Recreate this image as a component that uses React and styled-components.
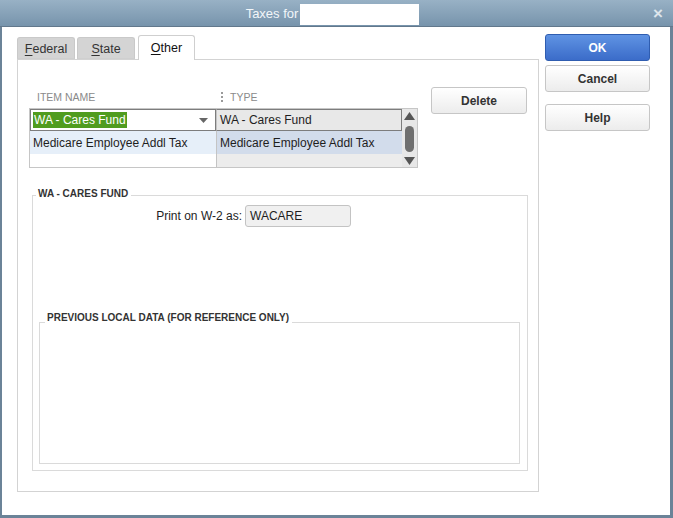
import React from "react";
import styled, { createGlobalStyle } from "styled-components";

const GlobalStyle = createGlobalStyle`
  html, body {
    margin: 0;
    padding: 0;
    background: #6b8398;
  }
  body {
    font-family: "Liberation Sans", Arial, sans-serif;
    font-size: 12px;
    color: #222;
  }
`;

const App = () => {
  return (
    <>
      <GlobalStyle />
      <Window>
        <TitleBar>
          <Title>
            Taxes for
            <Redact />
          </Title>
          <Close>×</Close>
        </TitleBar>

        <Body>
          <Main>
            <Tabs>
              <Tab>
                <u>F</u>ederal
              </Tab>
              <Tab>
                <u>S</u>tate
              </Tab>
              <Tab $active>
                <u>O</u>ther
              </Tab>
            </Tabs>

            <Panel>
              <TopRow>
                <ListBlock>
                  <HeaderRow>
                    <HeaderCell>ITEM NAME</HeaderCell>
                    <HeaderCell $sep>TYPE</HeaderCell>
                  </HeaderRow>
                  <Table>
                    <Rows>
                      <Cell $bg="#ffffff" $outlined $first>
                        <Picked>WA - Cares Fund</Picked>
                        <DropArrow width="9" height="5" viewBox="0 0 9 5">
                          <path d="M0 0 L9 0 L4.5 5 Z" fill="#666" />
                        </DropArrow>
                      </Cell>
                      <Cell $bg="#e8e8e8" $outlined>
                        WA - Cares Fund
                      </Cell>
                      <Cell $bg="#e6eff9" $first>
                        Medicare Employee Addl Tax
                      </Cell>
                      <Cell $bg="#d2dceb">Medicare Employee Addl Tax</Cell>
                      <Cell $bg="#ffffff" $first />
                      <Cell $bg="#ececec" />
                    </Rows>
                    <ScrollBar>
                      <svg width="11" height="8" viewBox="0 0 11 8">
                        <path d="M5.5 0 L11 8 L0 8 Z" fill="#555" />
                      </svg>
                      <Thumb />
                      <svg width="11" height="8" viewBox="0 0 11 8">
                        <path d="M0 0 L11 0 L5.5 8 Z" fill="#555" />
                      </svg>
                    </ScrollBar>
                  </Table>
                </ListBlock>
                <DeleteButton>Delete</DeleteButton>
              </TopRow>

              <Group $outer>
                <Legend $top={-8} $left={3}>
                  WA - CARES FUND
                </Legend>
                <FieldRow>
                  <FieldLabel>Print on W-2 as:</FieldLabel>
                  <FieldInput>WACARE</FieldInput>
                </FieldRow>
                <Group>
                  <Legend $top={-11} $left={5}>
                    PREVIOUS LOCAL DATA (FOR REFERENCE ONLY)
                  </Legend>
                </Group>
              </Group>
            </Panel>
          </Main>

          <Side>
            <Button $primary>OK</Button>
            <Button $gap={4}>Cancel</Button>
            <Button $gap={12}>Help</Button>
          </Side>
        </Body>
      </Window>
    </>
  );
};

const Window = styled.div`
  display: flex;
  flex-direction: column;
  width: 673px;
  height: 518px;
  background: #6b8398;
`;
const TitleBar = styled.div`
  position: relative;
  display: flex;
  align-items: center;
  justify-content: center;
  height: 26px;
  border-bottom: 1px solid #62788c;
  background: linear-gradient(#98b1c5, #7794ac);
`;
const Title = styled.div`
  display: flex;
  align-items: center;
  gap: 2px;
  margin-right: 8px;
  color: #f2f6f9;
  font-size: 13px;
`;
const Redact = styled.div`
  width: 119px;
  height: 21px;
  margin-top: 3px;
  background: #ffffff;
`;
const Close = styled.div`
  position: absolute;
  right: 10px;
  top: 5px;
  color: #dde5ec;
  font-size: 17px;
  font-weight: bold;
  line-height: 18px;
`;
const Body = styled.div`
  display: flex;
  flex: 1;
  margin: 0 3px 3px 2px;
  padding: 9px 0 0 15px;
  background: #ffffff;
`;
const Main = styled.div`
  display: flex;
  flex-direction: column;
  width: 522px;
`;
const Tabs = styled.div`
  display: flex;
  align-items: flex-end;
  height: 23px;
  gap: 2px;
`;
const Tab = styled.div`
  position: relative;
  z-index: ${(p) => (p.$active ? 2 : 1)};
  display: flex;
  align-items: center;
  justify-content: center;
  box-sizing: border-box;
  width: ${(p) => (p.$active ? "57px" : "58px")};
  height: ${(p) => (p.$active ? "25px" : "22px")};
  margin-left: ${(p) => (p.$active ? "1px" : "0")};
  margin-bottom: ${(p) => (p.$active ? "-1px" : "0")};
  padding-top: ${(p) => (p.$active ? "0" : "1px")};
  border: 1px solid ${(p) => (p.$active ? "#cfcfcf" : "#c9c9c9")};
  border-bottom: ${(p) => (p.$active ? "none" : "1px solid #cfcfcf")};
  border-radius: 3px 3px 0 0;
  background: ${(p) => (p.$active ? "#ffffff" : "#d4d4d4")};
  color: ${(p) => (p.$active ? "#111" : "#333")};
  font-size: 12.5px;
  u {
    text-decoration-thickness: 1px;
    text-underline-offset: 2px;
  }
`;
const Panel = styled.div`
  display: flex;
  flex-direction: column;
  box-sizing: border-box;
  height: 433px;
  border: 1px solid #d3d3d3;
`;
const TopRow = styled.div`
  display: flex;
  align-items: flex-start;
  margin-top: 27px;
  padding-left: 11px;
`;
const ListBlock = styled.div`
  display: flex;
  flex-direction: column;
  width: 389px;
`;
const HeaderRow = styled.div`
  display: grid;
  grid-template-columns: 185px 1fr;
  height: 18px;
  margin: 1px 0 2px;
`;
const HeaderCell = styled.div`
  display: flex;
  align-items: center;
  padding-left: ${(p) => (p.$sep ? "7px" : "8px")};
  color: #8a8a8a;
  font-size: 10.5px;
  &::before {
    content: "";
    display: ${(p) => (p.$sep ? "block" : "none")};
    width: 0;
    height: 10px;
    margin-right: 7px;
    border-left: 2px dotted #9a9a9a;
  }
`;
const Table = styled.div`
  display: flex;
  box-sizing: border-box;
  height: 60px;
  border: 1px solid #c6c6c6;
`;
const Rows = styled.div`
  display: grid;
  flex: 1;
  grid-template-columns: 186px 1fr;
  grid-template-rows: 22px 23px 1fr;
`;
const Cell = styled.div`
  display: flex;
  align-items: center;
  box-sizing: border-box;
  padding-left: ${(p) => (p.$first ? "3px" : "3px")};
  padding-right: 6px;
  background: ${(p) => p.$bg};
  border: ${(p) => (p.$outlined ? "1px solid #7d7d7d" : "none")};
  border-left: ${(p) =>
    p.$first ? (p.$outlined ? "1px solid #7d7d7d" : "none") : "1px solid #c4c4c4"};
  color: #1e1e1e;
  font-size: 12px;
  white-space: nowrap;
`;
const Picked = styled.span`
  margin-left: -1px;
  padding: 1px 1px;
  background: #509c1f;
  color: #ffffff;
`;
const DropArrow = styled.svg`
  margin-left: auto;
  margin-right: 1px;
`;
const ScrollBar = styled.div`
  display: flex;
  flex-direction: column;
  align-items: center;
  justify-content: space-between;
  width: 15px;
  padding: 3px 0 2px;
  box-sizing: border-box;
  background: #e7e7e7;
`;
const Thumb = styled.div`
  width: 9px;
  height: 26px;
  border-radius: 5px;
  background: #6f6f6f;
`;
const Button = styled.div`
  display: flex;
  align-items: center;
  justify-content: center;
  box-sizing: border-box;
  width: 105px;
  height: 27px;
  margin-top: ${(p) => (p.$gap ? `${p.$gap}px` : "0")};
  border: 1px solid ${(p) => (p.$primary ? "#2f5db0" : "#c6c6c6")};
  border-radius: 3px;
  background: ${(p) =>
    p.$primary
      ? "linear-gradient(#5f93e3, #3b6cc9)"
      : "linear-gradient(#ffffff, #ececec)"};
  color: ${(p) => (p.$primary ? "#ffffff" : "#333")};
  font-size: 12px;
  font-weight: bold;
`;
const DeleteButton = styled(Button)`
  width: 96px;
  margin-left: 13px;
`;
const Side = styled.div`
  display: flex;
  flex-direction: column;
  margin: -2px 0 0 6px;
`;
const Group = styled.div`
  position: relative;
  display: flex;
  flex-direction: column;
  box-sizing: border-box;
  border: 1px solid #dadada;
  ${(p) =>
    p.$outer
      ? `
    flex: 1;
    margin: 27px 10px 20px 14px;
    padding-top: 9px;
  `
      : `
    height: 142px;
    margin: auto 7px 6px 6px;
  `}
`;
const Legend = styled.div`
  position: absolute;
  top: ${(p) => p.$top}px;
  left: ${(p) => p.$left}px;
  padding: 0 3px 0 2px;
  background: #ffffff;
  color: #333;
  font-size: 10px;
  font-weight: bold;
  line-height: 12px;
`;
const FieldRow = styled.div`
  display: flex;
  align-items: center;
  gap: 3px;
`;
const FieldLabel = styled.div`
  width: 209px;
  text-align: right;
  font-size: 12px;
  color: #1e1e1e;
`;
const FieldInput = styled.div`
  display: flex;
  align-items: center;
  box-sizing: border-box;
  width: 106px;
  height: 22px;
  padding-left: 4px;
  border: 1px solid #c3c3c3;
  border-radius: 3px;
  background: #f0f0f0;
  font-size: 12px;
  color: #1e1e1e;
`;

export default App;
